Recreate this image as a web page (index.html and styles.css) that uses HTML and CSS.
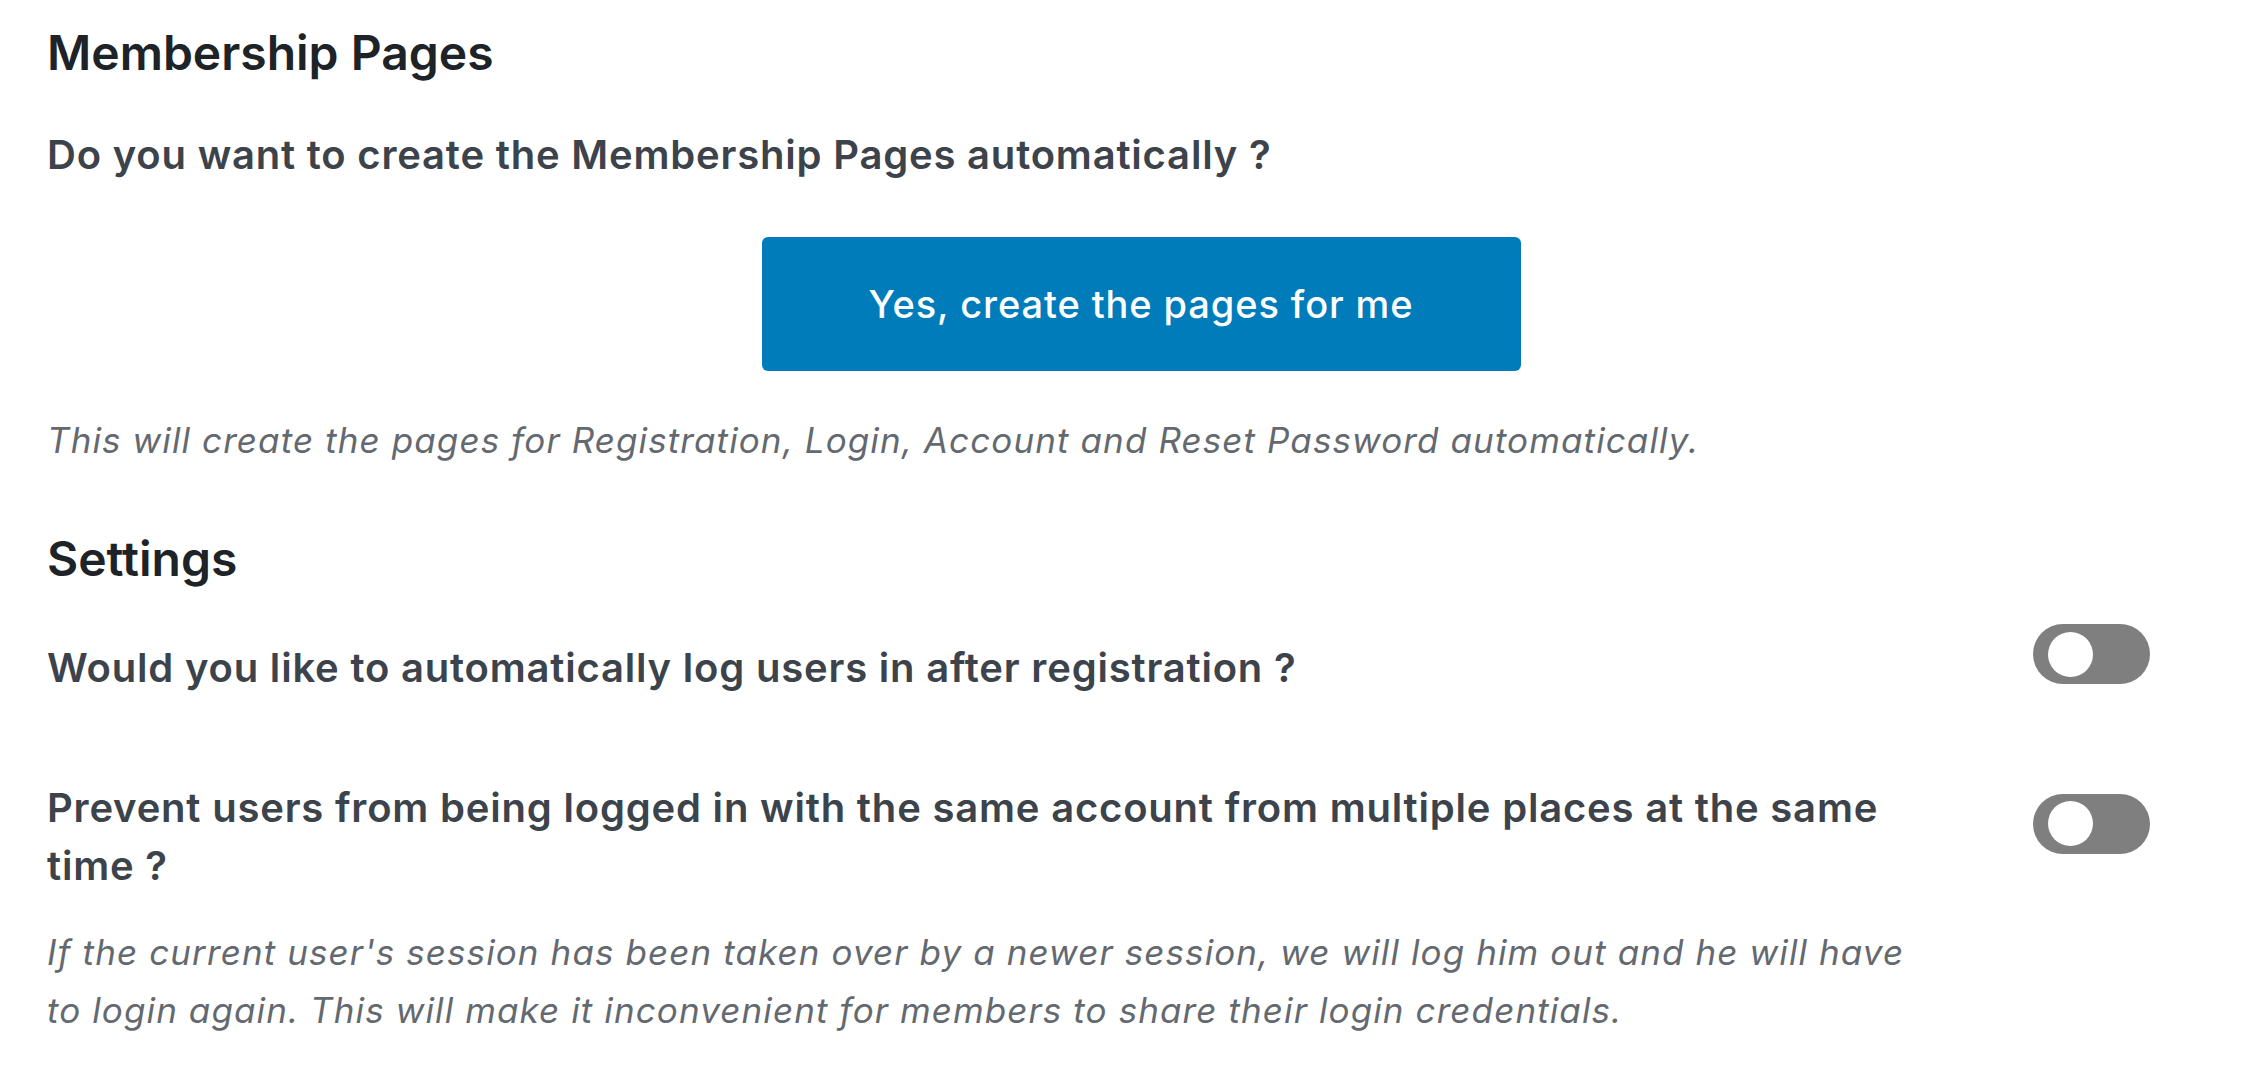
FILE: index.html
```html
<!DOCTYPE html>
<html lang="en">
<head>
<meta charset="UTF-8">
<title>Membership Setup</title>
<link rel="stylesheet" href="styles.css">
</head>
<body>
<div class="wrap">
  <h2 class="title">Membership Pages</h2>
  <p class="ask">Do you want to create the Membership Pages automatically ?</p>
  <div class="btn-row">
    <a class="btn" href="#">Yes, create the pages for me</a>
  </div>
  <p class="desc">This will create the pages for Registration, Login, Account and Reset Password automatically.</p>

  <h2 class="title settings">Settings</h2>
  <div class="opt first">
    <div class="opt-label">Would you like to automatically log users in after registration ?</div>
    <span class="toggle"><span class="knob"></span></span>
  </div>
  <div class="opt second">
    <div class="opt-label">Prevent users from being logged in with the same account from multiple places at the same time ?</div>
    <span class="toggle"><span class="knob"></span></span>
  </div>
  <p class="desc note">If the current user's session has been taken over by a newer session, we will log him out and he will have to login again. This will make it inconvenient for members to share their login credentials.</p>
</div>
</body>
</html>
```

FILE: styles.css
```css
body {
  margin: 0;
  background-color: #ffffff;
  font-family: Inter, "Noto Sans", sans-serif;
  color: #3c434a;
}
.wrap {
  width: 2188px;
  padding: 24px 0 0 47px;
}
.title {
  margin: 0;
  font-size: 48px;
  line-height: 58px;
  font-weight: 600;
  color: #1d2327;
}
.ask {
  margin: 44px 0 0 0;
  font-size: 40px;
  line-height: 58px;
  font-weight: 600;
  letter-spacing: 0.8px;
}
.btn-row {
  display: flex;
  justify-content: center;
  margin-top: 53px;
}
.btn {
  display: flex;
  align-items: center;
  justify-content: center;
  width: 759px;
  height: 134px;
  background-color: #007cba;
  color: #ffffff;
  border-radius: 6px;
  text-decoration: none;
  font-size: 38px;
  font-weight: 500;
  letter-spacing: 0.9px;
}
.desc {
  margin: 40px 0 0 0;
  font-size: 35px;
  line-height: 58px;
  font-style: italic;
  letter-spacing: 1.1px;
  color: #646970;
}
.settings {
  margin-top: 61px;
}
.opt {
  display: flex;
  align-items: center;
  width: 2103px;
}
.opt.first {
  margin-top: 36px;
}
.opt.second {
  margin-top: 68px;
}
.opt-label {
  width: 1880px;
  font-size: 40px;
  line-height: 58px;
  font-weight: 600;
  letter-spacing: 0.8px;
}
.toggle {
  margin-left: auto;
  margin-bottom: 27px;
  width: 117px;
  height: 60px;
  border-radius: 30px;
  background-color: #7f7f7f;
  display: flex;
  align-items: center;
  padding-left: 15px;
  box-sizing: border-box;
}
.knob {
  width: 45px;
  height: 45px;
  border-radius: 50%;
  background-color: #ffffff;
}
.note {
  width: 1870px;
  margin-top: 28px;
}
```
